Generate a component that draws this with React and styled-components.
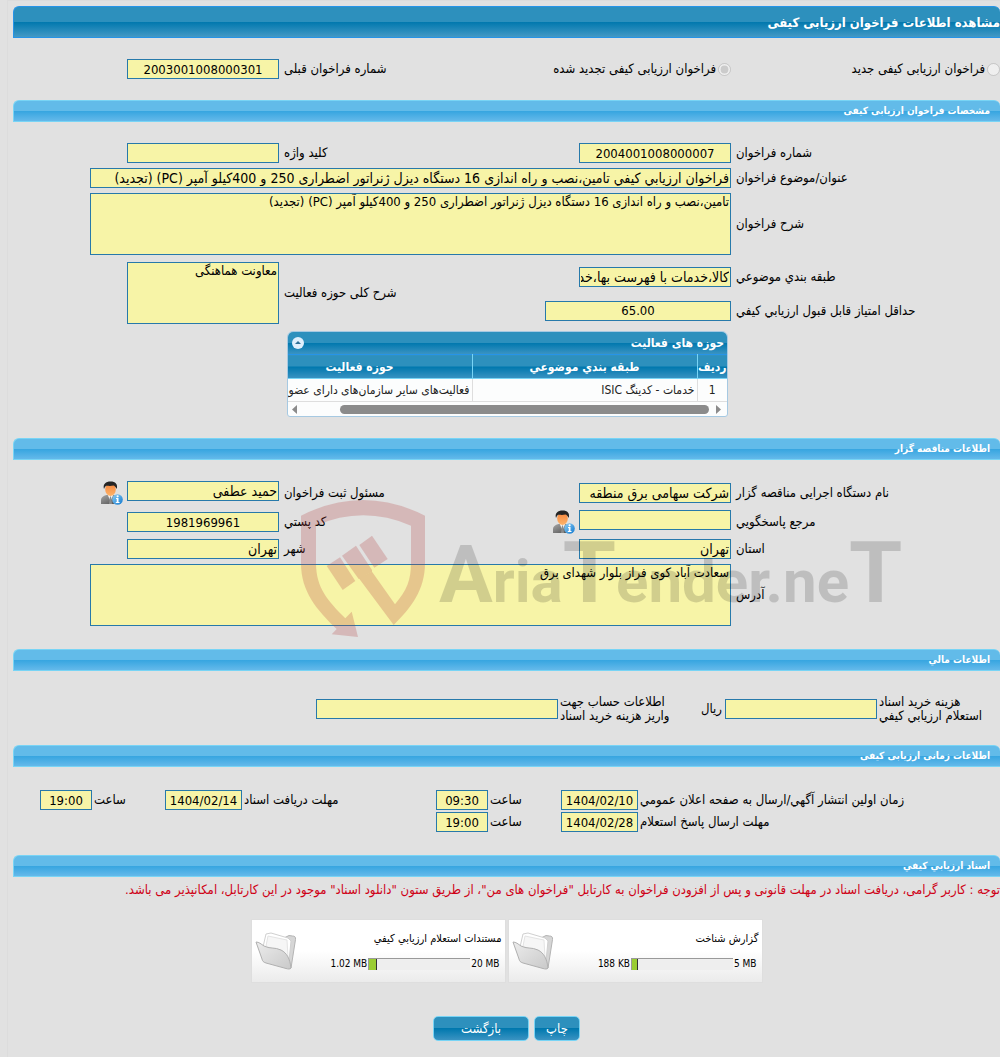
import styled, { createGlobalStyle } from "styled-components";

const GlobalStyle = createGlobalStyle`
  * {
    box-sizing: border-box;
  }

  body {
    margin: 0;
    background: #e1e1e1;
  }

  body, input, textarea, button {
    font-family: "DejaVu Sans Condensed", "DejaVu Sans", sans-serif;
  }
`;

const Page = styled.main`
  direction: rtl;
  min-height: 100vh;
  margin-left: 7px;
  padding: 5px 0 16px 5px;
  border-top: 1px solid #dcdcdc;
  border-left: 1px solid #dcdcdc;
  background: #e1e1e1;
  color: #000;
  font-size: 13px;
  line-height: 16px;
`;

const PageTitle = styled.h1`
  margin: 0;
  height: 32px;
  border: 1px solid #2694e8;
  border-right: none;
  border-radius: 6px 6px 0 0;
  background: linear-gradient(#2d90bd 50%, #0078ae 50%, #4499c5);
  color: #fff;
  font-size: 13px;
  line-height: 32px;
`;

const SectionTitle = styled.h2`
  margin: 0;
  height: 22px;
  padding-right: 10px;
  border: 1px solid #78d4f5;
  border-right: none;
  border-radius: 6px 6px 0 0;
  background: linear-gradient(#62bbe9 50%, #36a5e0 50%, #64b9ea);
  color: #fff;
  font-size: 10px;
  line-height: 20px;
`;

const Fields = styled.div`
  position: relative;
  display: grid;
  grid-template-columns: ${(props) => props.$columns};
  align-items: center;
  row-gap: ${(props) => props.$gap || 5}px;
  padding: ${(props) => props.$top || 21}px 0 ${(props) => props.$bottom || 21}px;
`;

const mainColumns =
  "minmax(0, 269fr) minmax(0, 152fr) minmax(0, 300fr) minmax(0, 152fr) minmax(0, 37fr) minmax(0, 77fr)";
const moneyColumns =
  "minmax(0, 123fr) minmax(0, 152fr) minmax(0, 26fr) minmax(0, 141fr) minmax(0, 242fr) minmax(0, 303fr)";
const timeColumns =
  "minmax(0, 362fr) minmax(0, 77fr) minmax(0, 73fr) minmax(0, 52fr) minmax(0, 194fr) minmax(0, 77fr) minmax(0, 73fr) minmax(0, 52fr) minmax(0, 27fr)";

const Label = styled.label`
  grid-column: ${(props) => props.$column || "auto"};
  grid-row: ${(props) => props.$row || "auto"};
  padding-left: ${(props) => (props.$tight ? 2 : 5)}px;
  text-align: left;
  white-space: nowrap;
`;

const StackedLabel = styled(Label)`
  line-height: 14px;
`;

const Unit = styled.span`
  padding-right: 3px;
`;

const Choice = styled.label`
  display: flex;
  align-items: center;
  gap: 2px;
  white-space: nowrap;
`;

const Radio = styled.input`
  width: 13px;
  height: 13px;
  margin: 0;
`;

const Cell = styled.div`
  grid-column: ${(props) => props.$column};
  grid-row: ${(props) => props.$row || "auto"};
  display: flex;
  align-items: flex-start;
  gap: 4px;
`;

const Input = styled.input`
  grid-column: ${(props) => props.$column || "auto"};
  flex: none;
  width: 100%;
  height: 20px;
  padding: 0 1px;
  border: 1px solid #2779aa;
  outline: none;
  background: #f7f4a7;
  color: #000;
  font-size: ${(props) => (props.$number ? 13 : 14)}px;
  text-align: ${(props) => (props.$number ? "center" : "right")};
`;

const ScoreInput = styled(Input)`
  width: 186px;
`;

const Textarea = styled.textarea`
  grid-column: ${(props) => props.$column};
  grid-row: ${(props) => props.$row || "auto"};
  display: block;
  width: 100%;
  height: 62px;
  padding: 0 1px;
  border: 1px solid #2779aa;
  border-radius: 0;
  outline: none;
  resize: none;
  background: #f7f4a7;
  color: #000;
  font-size: 13px;
  line-height: 16px;
`;

const CategoryFields = styled.div`
  grid-column: 1 / -1;
  display: grid;
  grid-template-columns: subgrid;
  grid-template-rows: 30px 27px;
  align-items: center;
  row-gap: 5px;
  margin: 2px 0;
`;

const Panel = styled.section`
  grid-column: 2 / 4;
  margin: 0 3px 0 8px;
  overflow: hidden;
  border: 1px solid #a6c9e2;
  border-radius: 6px 6px 3px 3px;
  background: #fcfdfd;
`;

const PanelHeader = styled.header`
  display: flex;
  align-items: center;
  justify-content: space-between;
  height: 22px;
  padding: 0 3px 0 4px;
  background: linear-gradient(#2d90bd 50%, #0078ae 50%, #3a93c2);
  color: #fff;
  font-size: 12px;
  font-weight: 700;
`;

const CollapseButton = styled.button`
  display: flex;
  padding: 0;
  border: none;
  background: none;
`;

const Table = styled.table`
  width: 480px;
  table-layout: fixed;
  border-collapse: collapse;
  font-size: 12px;
`;

const Th = styled.th`
  width: ${(props) => props.$width}px;
  height: 24px;
  padding: 0;
  border-top: 1px solid #2694e8;
  border-bottom: 1px solid #78d4f5;
  border-left: 1px solid #78d4f5;
  background: linear-gradient(#2d90bd 50%, #0078ae 50%, #3a93c2);
  color: #fff;
  font-size: 12px;
  white-space: nowrap;
`;

const Td = styled.td`
  height: 23px;
  padding: 0 2px;
  border-bottom: 1px solid #dedede;
  border-left: 1px solid #dedede;
  color: #222;
  text-align: ${(props) => (props.$center ? "center" : "right")};
  white-space: nowrap;
`;

const ScrollBar = styled.div`
  display: flex;
  align-items: center;
  gap: 7px;
  height: 14px;
  padding: 0 6px 0 4px;
`;

const ScrollTrack = styled.div`
  flex: 1;
`;

const ScrollThumb = styled.div`
  width: 91%;
  height: 9px;
  border-radius: 5px;
  background: #8b8b8b;
`;

const Watermark = styled.svg`
  position: absolute;
  top: 40px;
  left: 29%;
  width: 608px;
  height: 138px;
  pointer-events: none;
`;

const Notice = styled.p`
  margin: 5px 0 0;
  color: #cf0015;
`;

const Documents = styled.div`
  display: flex;
  justify-content: center;
  gap: 2px;
  padding: 21px 0 33px;
`;

const Card = styled.article`
  display: flex;
  align-items: center;
  justify-content: space-between;
  width: 255px;
  height: 64px;
  padding: 0 3px;
  border: 1px solid #dedede;
  background: linear-gradient(#fff 50%, #ebebeb);
`;

const CardInfo = styled.div`
  display: flex;
  flex-direction: column;
  gap: 12px;
`;

const CardTitle = styled.h3`
  margin: 0;
  font-size: 11px;
  font-weight: 400;
  line-height: 14px;
`;

const Usage = styled.div`
  display: flex;
  align-items: center;
  gap: 1px;
  padding-right: 2px;
  font-size: 10px;
  line-height: 12px;
`;

const Size = styled.span`
  direction: ltr;
  white-space: nowrap;
`;

const UsageBar = styled.div`
  direction: ltr;
  width: 102px;
  height: 12px;
  border-top: 1px solid #999;
  border-left: 1px solid #999;
  background: #eee;
`;

const UsageFill = styled.div`
  height: 11px;
  border-right: 1px solid #333;
  background: #9acd32;
`;

const Actions = styled.footer`
  display: flex;
  justify-content: center;
  gap: 5px;
`;

const Button = styled.button`
  width: ${(props) => props.$width}px;
  height: 25px;
  padding: 0;
  border: 1px solid #78d4f5;
  border-radius: 5px;
  background: linear-gradient(#2d90bd 50%, #0078ae 50%, #3a93c2);
  color: #fff;
  font-size: 13px;
`;

const IconSvg = styled.svg`
  display: block;
  flex: none;
`;

const PersonIcon = () => (
  <IconSvg width="22" height="24" viewBox="0 0 22 24" aria-hidden="true">
    <defs>
      <linearGradient id="suit" x1="0" y1="0" x2="1" y2="1">
        <stop offset="0" stopColor="#a5a5a5" />
        <stop offset="1" stopColor="#4c4c4c" />
      </linearGradient>
      <linearGradient id="face" x1="0" y1="0" x2="0" y2="1">
        <stop offset="0" stopColor="#f5833a" />
        <stop offset="1" stopColor="#ffb46a" />
      </linearGradient>
      <linearGradient id="info" x1="0" y1="0" x2="1" y2="1">
        <stop offset="0" stopColor="#8fd0f7" />
        <stop offset="1" stopColor="#0f78cf" />
      </linearGradient>
    </defs>
    <path d="M0 23V19C0 16.500 2 15 5.500 14H12.500C16 15 18 16.500 18 19V23Z" fill="url(#suit)" />
    <path d="M6.500 13.500L9.500 20 12.500 13.500Z" fill="#f4f4f4" />
    <path d="M9 15.500L8 23H11L10 15.500Z" fill="#8c8c8c" />
    <ellipse cx="9.500" cy="8.500" rx="5.300" ry="6.500" fill="url(#face)" />
    <path d="M3 8C1.500 3 5 .5 9.500.5C14.500.5 17 3 15.800 8C15 6.500 14 5 12.500 4.500C9 5.500 6 4.500 5 5C4 5.500 3.500 7 3 8Z" fill="#252525" />
    <circle cx="16.500" cy="18.500" r="5.300" fill="url(#info)" />
    <path d="M15 17H17.500V21H18.500V22H14.800V21H15.700V18H15Z" fill="#fff" />
    <circle cx="16.600" cy="15.300" r="1.100" fill="#fff" />
  </IconSvg>
);

const FolderIcon = () => (
  <IconSvg width="42" height="38" viewBox="0 0 42 38" aria-hidden="true">
    <defs>
      <linearGradient id="folder" x1="0" y1="0" x2="1" y2="1">
        <stop offset="0" stopColor="#ececec" />
        <stop offset="1" stopColor="#c9c9c9" />
      </linearGradient>
    </defs>
    <path d="M36 36L40.500 7.500C41 5 39.500 4 37.500 4L34 3.500L29 6L20 4L8 20Z" fill="#d6d6d6" stroke="#b4b4b4" />
    <path d="M8 15L11 2L16 1L33 6L36 9L34 29Z" fill="#fff" stroke="#d0d0d0" />
    <path d="M11 14L13 4L32 8L33 25Z" fill="#f6f6f6" stroke="#e4e4e4" />
    <path d="M1 10C4 10 6 12 9 14C14 17 20 15 26 18C32 21 35 27 36 36C35 37.500 33 37 31 36.500L11 31C8 30 7.500 29 7 27Z" fill="url(#folder)" stroke="#b0b0b0" />
  </IconSvg>
);

const CollapseIcon = () => (
  <svg width="12" height="12" viewBox="0 0 12 12" aria-hidden="true">
    <circle cx="6" cy="6" r="6" fill="#dfeffc" />
    <path d="M3 7L6 4L9 7Z" fill="#2d6f96" />
  </svg>
);

const Arrow = ({ right }) => (
  <svg width="5" height="9" viewBox="0 0 5 9" aria-hidden="true">
    <path d={right ? "M0 0L5 4.500L0 9Z" : "M5 0L0 4.500L5 9Z"} fill="#8b8b8b" />
  </svg>
);

const Brand = () => (
  <Watermark viewBox="-2 0 608 138">
    <g fill="#b54141" opacity="0.25">
      <path d="M0 15.700Q62 -15.700 124 15.700V63C124 90 110 108 92.700 125L57.700 78L71 71.700L94 104.300C106 90 110 80 110 63V25.700Q62 5 15 25.700V63C15 88 27 101 44.300 118.300L50.700 111.700L57 137L30.700 134.300L35.700 129C16 110 0 92 0 63Z" />
      <path d="M58.300 45L71 35.700L86.700 59L73.300 67.700Z" />
      <path d="M41 55.700L55 45.700L71 70V72L57.700 79Z" />
      <path d="M25.700 66L39 57.300L54.300 81L41.700 90Z" />
    </g>
    <text
      x="138"
      y="102"
      direction="ltr"
      fontFamily="Roboto, sans-serif"
      fontSize="60"
      fontWeight="700"
      opacity="0.15"
    >
      <tspan fontSize="80">A</tspan>ria<tspan fontSize="86">T</tspan>ender.ne<tspan fontSize="86">T</tspan>
    </text>
  </Watermark>
);

const documents = [
  { title: "گزارش شناخت", limit: "5 MB", used: "188 KB", percent: 6 },
  { title: "مستندات استعلام ارزيابي کيفي", limit: "20 MB", used: "1.02 MB", percent: 8 },
];

const App = () => {
  return (
    <Page>
      <GlobalStyle />
      <PageTitle>مشاهده اطلاعات فراخوان ارزیابی کیفی</PageTitle>
      <Fields $columns={mainColumns}>
        <Choice>
          <Radio type="radio" name="kind" disabled />
          فراخوان ارزیابی کیفی جدید
        </Choice>
        <Choice>
          <Radio type="radio" name="kind" disabled defaultChecked />
          فراخوان ارزیابی کیفی تجدید شده
        </Choice>
        <Label htmlFor="previous">شماره فراخوان قبلی</Label>
        <Input id="previous" $number readOnly value="2003001008000301" />
      </Fields>

      <SectionTitle>مشخصات فراخوان ارزیابی کیفی</SectionTitle>
      <Fields $columns={mainColumns}>
        <Label htmlFor="number">شماره فراخوان</Label>
        <Input id="number" $number readOnly value="2004001008000007" />
        <Label htmlFor="keyword">کلید واژه</Label>
        <Input id="keyword" readOnly value="" />

        <Label htmlFor="subject" $column="1">عنوان/موضوع فراخوان</Label>
        <Input
          id="subject"
          $column="2 / 6"
          readOnly
          value="فراخوان ارزيابي کيفي تامین،نصب و راه اندازی 16 دستگاه دیزل ژنراتور اضطراری 250 و 400کیلو آمپر (PC) (تجدید)"
        />

        <Label htmlFor="description" $column="1">شرح فراخوان</Label>
        <Textarea
          id="description"
          $column="2 / 6"
          readOnly
          value="تامین،نصب و راه اندازی 16 دستگاه دیزل ژنراتور اضطراری 250 و 400کیلو آمپر (PC) (تجدید)"
        />

        <CategoryFields>
          <Label htmlFor="category" $column="1">طبقه بندي موضوعي</Label>
          <Input id="category" $column="2" readOnly value="کالا،خدمات با فهرست بها،خدمات" />
          <Label htmlFor="activity" $column="3" $row="1 / 3">شرح کلی حوزه فعالیت</Label>
          <Textarea id="activity" $column="4" $row="1 / 3" readOnly value="معاونت هماهنگی" />
          <Label htmlFor="score" $column="1" $row="2">حداقل امتیاز قابل قبول ارزيابي کيفي</Label>
          <Cell $column="2 / 4" $row="2">
            <ScoreInput id="score" $number readOnly value="65.00" />
          </Cell>
        </CategoryFields>

        <Panel>
          <PanelHeader>
            حوزه های فعالیت
            <CollapseButton type="button" aria-label="بستن">
              <CollapseIcon />
            </CollapseButton>
          </PanelHeader>
          <Table>
            <thead>
              <tr>
                <Th $width={30}>ردیف</Th>
                <Th $width={225}>طبقه بندي موضوعي</Th>
                <Th $width={225}>حوزه فعالیت</Th>
              </tr>
            </thead>
            <tbody>
              <tr>
                <Td $center>1</Td>
                <Td>خدمات - کدینگ ISIC</Td>
                <Td>فعالیت‌های سایر سازمان‌های دارای عضویت</Td>
              </tr>
            </tbody>
          </Table>
          <ScrollBar>
            <Arrow right />
            <ScrollTrack>
              <ScrollThumb />
            </ScrollTrack>
            <Arrow />
          </ScrollBar>
        </Panel>
      </Fields>

      <SectionTitle>اطلاعات مناقصه گزار</SectionTitle>
      <Fields $columns={mainColumns} $bottom={23}>
        <Label htmlFor="agency" $column="1">نام دستگاه اجرایی مناقصه گزار</Label>
        <Input id="agency" $column="2" readOnly value="شرکت سهامی برق منطقه" />
        <Label htmlFor="registrar" $column="3">مسئول ثبت فراخوان</Label>
        <Cell $column="4">
          <Input id="registrar" readOnly value="حمید عطفی" />
          <PersonIcon />
        </Cell>

        <Label htmlFor="contact" $column="1">مرجع پاسخگويي</Label>
        <Cell $column="2">
          <Input id="contact" readOnly value="" />
          <PersonIcon />
        </Cell>
        <Label htmlFor="postcode" $column="3">کد پستي</Label>
        <Input id="postcode" $column="4" $number readOnly value="1981969961" />

        <Label htmlFor="province" $column="1">استان</Label>
        <Input id="province" $column="2" readOnly value="تهران" />
        <Label htmlFor="city" $column="3">شهر</Label>
        <Input id="city" $column="4" readOnly value="تهران" />

        <Label htmlFor="address" $column="1">آدرس</Label>
        <Textarea
          id="address"
          $column="2 / 6"
          readOnly
          value="سعادت آباد کوی فراز بلوار شهدای برق"
        />
        <Brand />
      </Fields>

      <SectionTitle>اطلاعات مالي</SectionTitle>
      <Fields $columns={moneyColumns} $top={24} $bottom={22}>
        <StackedLabel htmlFor="cost" $tight>
          هزینه خرید اسناد
          <br />
          استعلام ارزيابي کيفي
        </StackedLabel>
        <Input id="cost" readOnly value="" />
        <Unit>ریال</Unit>
        <StackedLabel htmlFor="account" $tight>
          اطلاعات حساب جهت
          <br />
          واریز هزینه خرید اسناد
        </StackedLabel>
        <Input id="account" readOnly value="" />
      </Fields>

      <SectionTitle>اطلاعات زمانی ارزیابی کیفی</SectionTitle>
      <Fields $columns={timeColumns} $gap={2} $top={23} $bottom={23}>
        <Label htmlFor="publish-date" $column="1" $tight>زمان اولین انتشار آگهي/ارسال به صفحه اعلان عمومي</Label>
        <Input id="publish-date" $number readOnly value="1404/02/10" />
        <Label htmlFor="publish-time" $tight>ساعت</Label>
        <Input id="publish-time" $number readOnly value="09:30" />
        <Label htmlFor="receive-date" $tight>مهلت دریافت اسناد</Label>
        <Input id="receive-date" $number readOnly value="1404/02/14" />
        <Label htmlFor="receive-time" $tight>ساعت</Label>
        <Input id="receive-time" $number readOnly value="19:00" />

        <Label htmlFor="reply-date" $column="1" $tight>مهلت ارسال پاسخ استعلام</Label>
        <Input id="reply-date" $number readOnly value="1404/02/28" />
        <Label htmlFor="reply-time" $tight>ساعت</Label>
        <Input id="reply-time" $number readOnly value="19:00" />
      </Fields>

      <SectionTitle>اسناد ارزيابي کيفي</SectionTitle>
      <Notice>
        توجه : کاربر گرامی، دریافت اسناد در مهلت قانونی و پس از افزودن فراخوان به کارتابل "فراخوان های من"، از طریق ستون "دانلود اسناد" موجود در این کارتابل، امکانپذیر می باشد.
      </Notice>
      <Documents>
        {documents.map((item) => (
          <Card key={item.title}>
            <CardInfo>
              <CardTitle>{item.title}</CardTitle>
              <Usage>
                <Size>{item.limit}</Size>
                <UsageBar>
                  <UsageFill style={{ width: `${item.percent}%` }} />
                </UsageBar>
                <Size>{item.used}</Size>
              </Usage>
            </CardInfo>
            <FolderIcon />
          </Card>
        ))}
      </Documents>

      <Actions>
        <Button type="button" $width={46}>چاپ</Button>
        <Button type="button" $width={96}>بازگشت</Button>
      </Actions>
    </Page>
  );
};

export default App;
